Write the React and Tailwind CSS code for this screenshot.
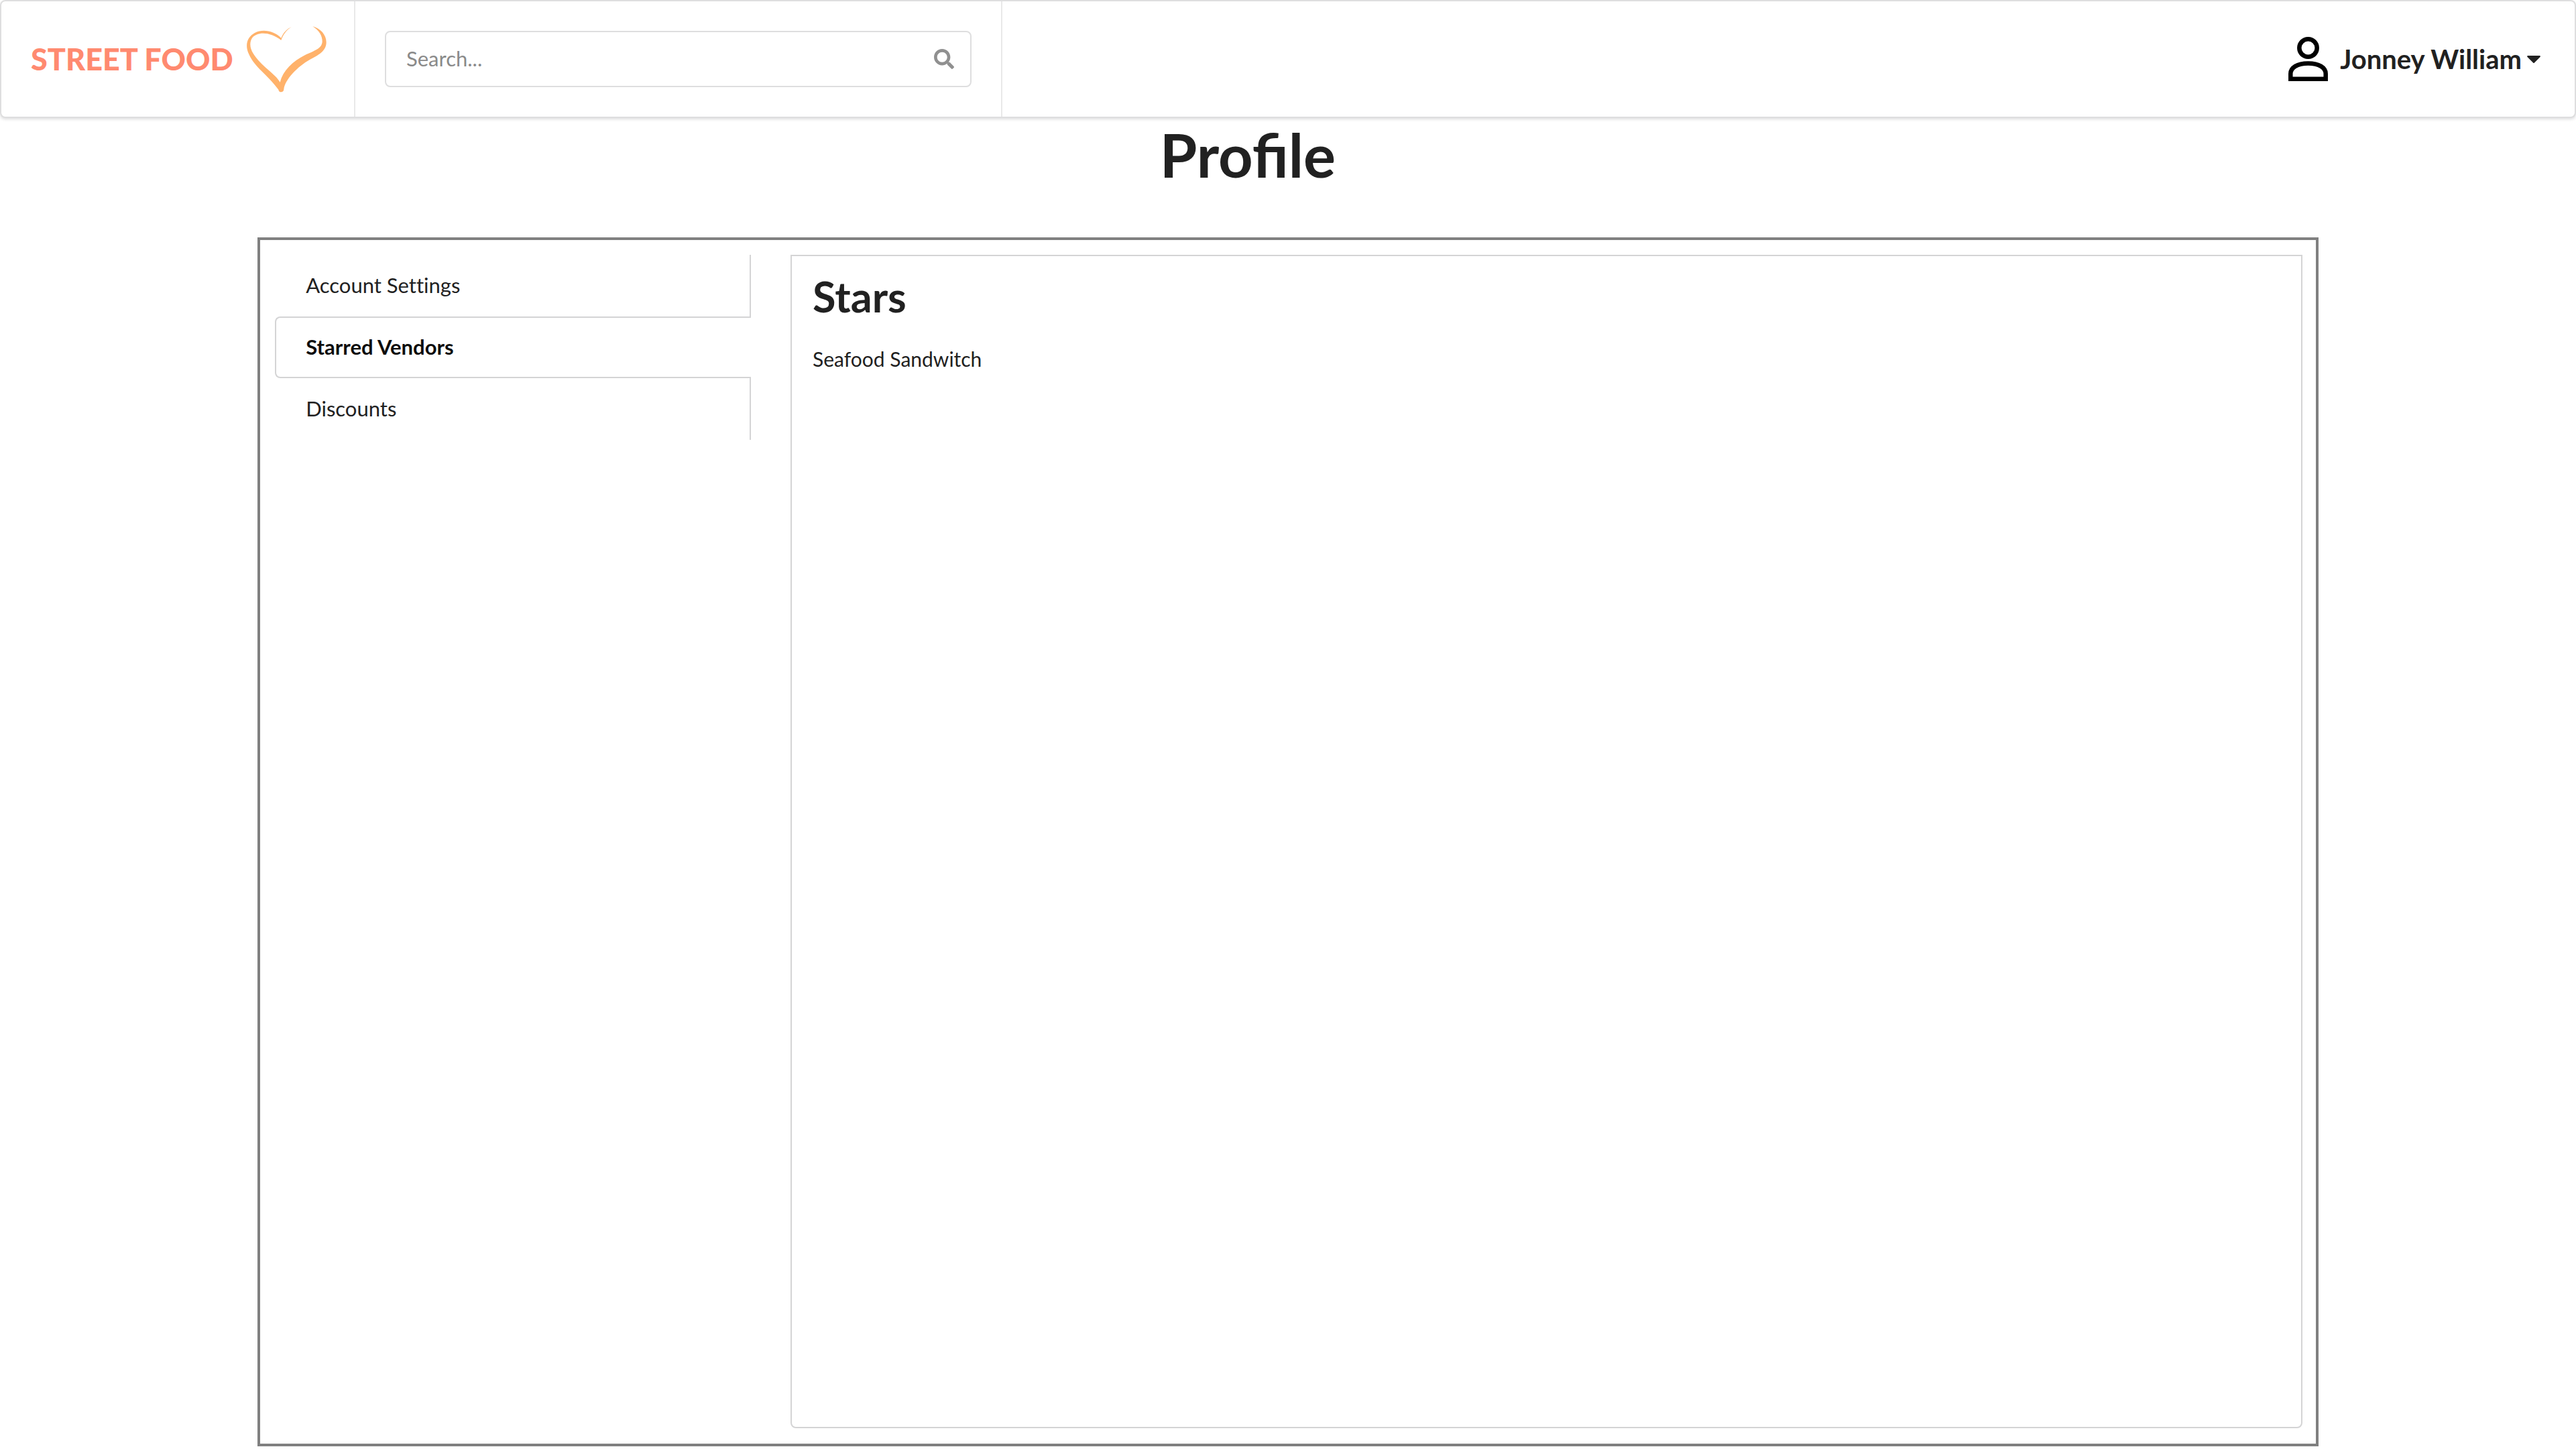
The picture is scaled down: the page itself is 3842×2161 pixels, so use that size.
const tabs = ["Account Settings", "Starred Vendors", "Discounts"];

function Heart() {
  return (
    <svg viewBox="20 26 357 297" className="h-[99px] w-[119px] shrink-0" fill="#ffb26b" aria-hidden="true">
      <path d="M220 30C200 38 184 55 174 79C140 45 90 38 56 56C22 74 10 112 30 152C55 210 110 240 162 310C163 325 186 325 186 308C190 265 250 205 302 176C340 156 376 138 376 98C376 65 350 36 315 27C345 46 358 70 358 95C356 128 320 136 280 156C225 184 182 225 169 277C150 240 84 205 49 148C34 125 31 98 45 78C67 50 125 50 174 89C182 68 195 44 220 30Z" />
    </svg>
  );
}

export default function App() {
  return (
    <div className="flex min-h-screen flex-col bg-white pb-1 font-['Lato',sans-serif] text-[30px] leading-10 text-[#212121]">
      <header className="flex h-44 items-stretch rounded-lg border-2 border-[#dededf] bg-white shadow-[0_2px_4px_0_rgba(34,36,38,0.15)]">
        <a href="#" className="flex w-[528px] items-center justify-between border-r-2 border-[#e9e9e9] pr-[41px] pl-[44px]">
          <span className="text-[45px] leading-[72px] font-black whitespace-nowrap text-[#ff8a70]">STREET FOOD</span>
          <Heart />
        </a>
        <form className="flex w-[965px] items-center border-r-2 border-[#e9e9e9] px-[44px]">
          <label className="flex h-[84px] w-full items-center rounded-lg border-2 border-[#dededf] pr-6 pl-[30px]">
            <input type="search" aria-label="Search" placeholder="Search..." className="h-10 min-w-0 flex-1 bg-transparent pb-0.5 text-[31px] outline-none placeholder:text-[#8a8a8a]" />
            <svg viewBox="0 0 512 512" className="size-[30px] fill-[#909090]" aria-hidden="true">
              <path d="M505 442.7L405.3 343c-4.500-4.500-10.600-7-17-7H372c27.600-35.300 44-79.700 44-128C416 93.100 322.900 0 208 0S0 93.100 0 208s93.100 208 208 208c48.300 0 92.700-16.400 128-44v16.300c0 6.400 2.500 12.500 7 17l99.700 99.700c9.400 9.400 24.600 9.400 33.900 0l28.300-28.300c9.400-9.400 9.400-24.600.1-34zM208 336c-70.700 0-128-57.200-128-128 0-70.700 57.200-128 128-128 70.700 0 128 57.200 128 128 0 70.700-57.200 128-128 128z" />
            </svg>
          </label>
        </form>
        <button type="button" className="ml-auto flex items-center pr-[51px] text-[40px] font-bold">
          <svg viewBox="0 0 59 66" className="mr-[18px] h-[66px] w-[59px]" fill="none" stroke="#000" strokeWidth="6.500" aria-hidden="true">
            <circle cx="29.500" cy="16.500" r="13.200" />
            <path d="M3.300 62.700V55C3.300 46 13 39.500 29.500 39.500S55.700 46 55.700 55V62.700Z" />
          </svg>
          Jonney William
          <svg viewBox="0 0 20 11" className="ml-2 h-[11px] w-5" fill="#212121" aria-hidden="true">
            <path d="M1 0H19Q20.500 .5 19.500 2L11 10.500Q10 11.500 9 10.500L.5 2Q-.5 .5 1 0Z" />
          </svg>
        </button>
      </header>

      <h1 className="mt-2 mr-[120px] text-center text-[90px] leading-[92px] font-bold">Profile</h1>

      <main className="mx-auto mt-[78px] grid w-4/5 flex-1 grid-cols-[710fr_2255fr] gap-[59px] border-4 border-[#808080] pt-[22px] pr-5 pb-[23px] pl-[22px]">
        <nav className="flex flex-col text-[31px] [font-variant-ligatures:none]">
          {tabs.map((tab, i) => (
            <a
              key={tab}
              href="#"
              aria-current={i === 1 ? "page" : undefined}
              className={
                i === 1
                  ? "flex h-[92px] items-center rounded-l-lg border-2 border-r-0 border-[#d4d4d5] px-11 pb-0.5 font-bold text-[#0d0d0d]"
                  : "flex h-[92px] items-center border-r-2 border-[#d4d4d5] px-[46px] pb-0.5"
              }
            >
              {tab}
            </a>
          ))}
        </nav>
        <section className="rounded-b-lg border-2 border-[#d4d4d5] px-[31px] pt-[27px]">
          <h2 className="text-[63px] leading-[66px] font-bold">Stars</h2>
          <p className="mt-10">Seafood Sandwitch</p>
        </section>
      </main>
    </div>
  );
}
